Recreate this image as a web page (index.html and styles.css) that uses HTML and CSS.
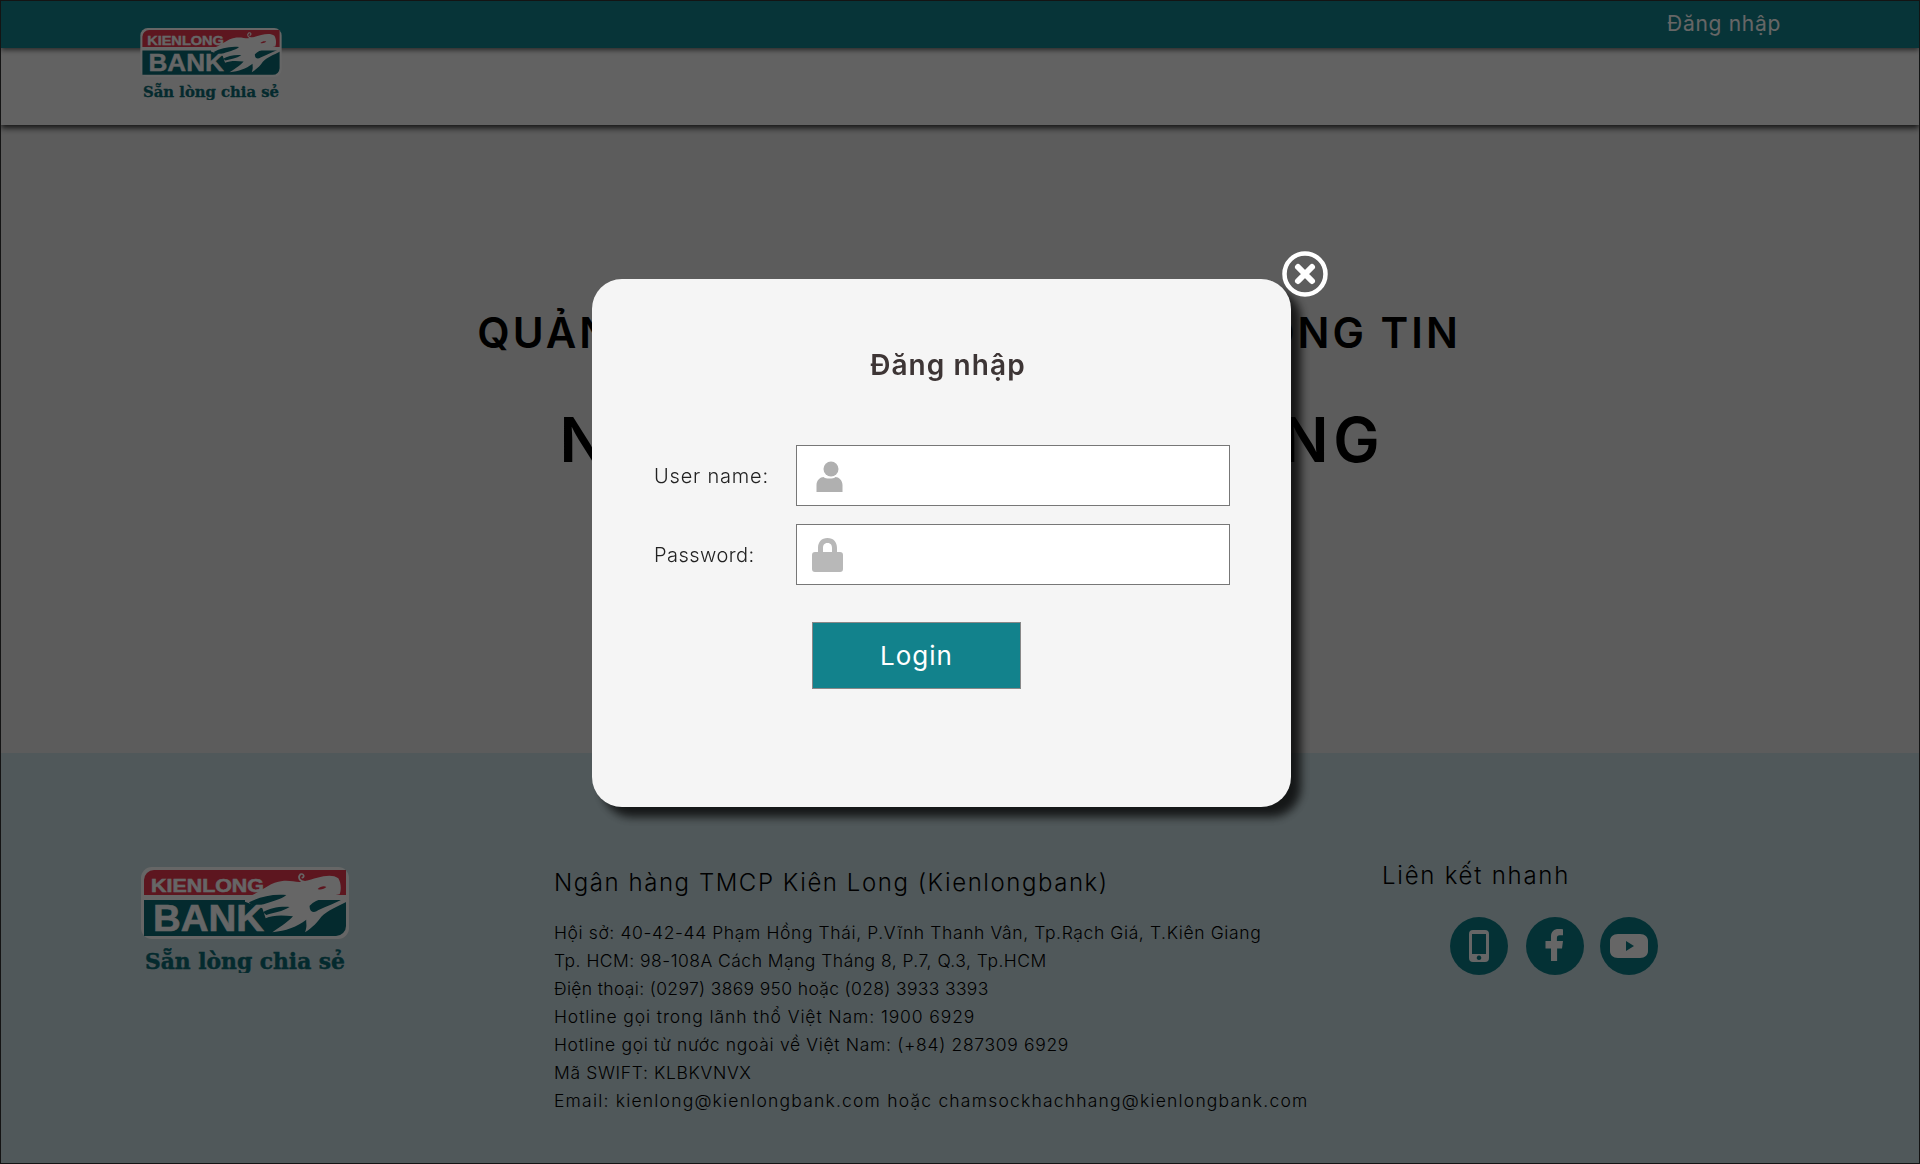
FILE: index.html
```html
<!DOCTYPE html>
<html lang="vi">
<head>
<meta charset="utf-8">
<title>Kienlongbank</title>
<link rel="stylesheet" href="styles.css">
</head>
<body>
<svg class="defs" width="0" height="0">
  <symbol id="kl-logo" viewBox="0 0 208 106">
    <rect x="0" y="0" width="208" height="72" rx="11" fill="#fff"/>
    <path d="M3 28V13a10 10 0 0 1 10-10H205V28Z" fill="#e8384e"/>
    <path d="M3 33H205V59a10 10 0 0 1-10 10H3Z" fill="#0a6a73"/>
    <g transform="translate(108 -2) scale(.3333)">
      <path fill="#fff" d="M-12 98C30 88 58 52 100 48C130 45 145 56 170 48C200 40 245 22 268 40C277 55 277 75 272 88C240 95 205 100 182 122C180 140 195 146 207 136C232 124 265 112 293 96V110C265 125 235 136 217 155C205 172 192 186 168 202C176 182 170 172 172 164C140 188 112 196 70 202C100 182 120 168 132 154C100 150 70 150 50 160L40 130L-12 110Z"/>
      <path fill="#0a6a73" d="M0 112C30 96 70 86 112 90C96 104 60 112 30 122C18 126 8 122 0 112Z"/>
      <path fill="#0a6a73" d="M42 142C60 130 90 124 122 126C100 140 76 142 52 150Z"/>
      <path fill="none" stroke="#fff" stroke-width="5" stroke-linecap="round" d="M172 50C150 52 146 36 154 28C164 24 168 36 160 38"/>
      <path fill="#e8384e" d="M206 72C214 64 226 62 232 66C226 72 214 76 206 72Z"/>
    </g>
    <text x="10" y="24.5" class="lg-top" textLength="113" lengthAdjust="spacingAndGlyphs">KIENLONG</text>
    <text x="12" y="64" class="lg-bank" textLength="111" lengthAdjust="spacingAndGlyphs">BANK</text>
    <text x="4" y="102" class="lg-tag" textLength="200" lengthAdjust="spacingAndGlyphs">Sẵn lòng chia sẻ</text>
  </symbol>
</svg>
<div class="page">
  <header class="site-header">
    <div class="topbar"><a class="top-login">Đăng nhập</a></div>
    <nav class="navbar"></nav>
    <svg class="header-logo"><use href="#kl-logo"/></svg>
  </header>
  <main class="hero">
    <h2 class="hero-sub">QUẢN LÝ VÀ TRA CỨU DỮ LIỆU THÔNG TIN</h2>
    <h1 class="hero-title">NGÂN HÀNG KIÊN LONG</h1>
  </main>
  <footer class="site-footer">
    <div class="foot-brand"><svg class="footer-logo"><use href="#kl-logo"/></svg></div>
    <div class="foot-info">
      <h3 class="foot-name">Ngân hàng TMCP Kiên Long (Kienlongbank)</h3>
      <ul class="foot-lines">
        <li class="line-address">Hội sở: 40-42-44 Phạm Hồng Thái, P.Vĩnh Thanh Vân, Tp.Rạch Giá, T.Kiên Giang</li>
        <li class="line-branch">Tp. HCM: 98-108A Cách Mạng Tháng 8, P.7, Q.3, Tp.HCM</li>
        <li class="line-phone">Điện thoại: (0297) 3869 950 hoặc (028) 3933 3393</li>
        <li class="line-hotline">Hotline gọi trong lãnh thổ Việt Nam: 1900 6929</li>
        <li class="line-intl">Hotline gọi từ nước ngoài về Việt Nam: (+84) 287309 6929</li>
        <li class="line-swift">Mã SWIFT: KLBKVNVX</li>
        <li class="line-email">Email: kienlong@kienlongbank.com hoặc chamsockhachhang@kienlongbank.com</li>
      </ul>
    </div>
    <div class="foot-links">
      <h3 class="foot-links-title">Liên kết nhanh</h3>
      <div class="social">
        <a class="social-btn"><svg viewBox="0 0 58 58" width="58" height="58"><path fill="#fff" fill-rule="evenodd" d="M23 13h12a4 4 0 0 1 4 4v24a4 4 0 0 1-4 4H23a4 4 0 0 1-4-4V17a4 4 0 0 1 4-4ZM22 17v20h14V17ZM29 38.500a2.300 2.300 0 1 0 .01 0Z"/></svg></a>
        <a class="social-btn social-mid"><svg viewBox="0 0 58 58" width="58" height="58"><path fill="#fff" d="M25 44V31.500h-5.500V24H25v-4.500C25 14.500 28 12 32.500 12c2 0 3.800.2 4.500.3v6h-3.200c-2.400 0-2.900 1.200-2.900 2.900V24H37l-1 7.500h-4.900V44Z"/></svg></a>
        <a class="social-btn"><svg viewBox="0 0 58 58" width="58" height="58"><path fill="#fff" fill-rule="evenodd" d="M18 17h22c5 0 8 3 8 7v10c0 4-3 7-8 7H18c-5 0-8-3-8-7V24c0-4 3-7 8-7ZM26 24v10l8-5Z"/></svg></a>
      </div>
    </div>
  </footer>
</div>
<div class="overlay">
  <section class="modal">
    <h2 class="modal-title">Đăng nhập</h2>
    <form class="login-form">
      <label class="form-label">User name:</label>
      <div class="field">
        <svg class="field-icon" viewBox="0 0 31 34" width="31" height="34"><circle cx="19" cy="10" r="7.500" fill="#b0b0b0"/><path fill="#b0b0b0" d="M6 33V26c0-5 4-8 7-8 2 2 10 2 12 0 3 0 7 3 7 8v7Z" transform="translate(-1.500 0)"/></svg>
        <input class="field-input" type="text" aria-label="User name">
      </div>
      <label class="form-label form-label-pass">Password:</label>
      <div class="field">
        <svg class="field-icon" viewBox="0 0 31 34" width="31" height="34"><path fill="#b8b8b8" fill-rule="evenodd" d="M15.500 0C21.500 0 25 4 25 10v4h3c2 0 3 1 3 3v14c0 2-1 3-3 3H3c-2 0-3-1-3-3V17c0-2 1-3 3-3h3v-4C6 4 9.500 0 15.500 0ZM15.500 5C12 5 11 7.500 11 10v4h9v-4c0-2.500-1-5-4.500-5Z"/></svg>
        <input class="field-input" type="password" aria-label="Password">
      </div>
      <button class="login-btn" type="button">Login</button>
    </form>
    <button class="modal-close" type="button" aria-label="Close"><svg viewBox="0 0 46 46" width="46" height="46"><circle cx="23" cy="23" r="20.500" fill="none" stroke="#fff" stroke-width="4.500"/><path d="M16 16L30 30M30 16L16 30" stroke="#fff" stroke-width="6" stroke-linecap="round"/></svg></button>
  </section>
</div>
</body>
</html>
```

FILE: styles.css
```css
* { box-sizing: border-box; }
html, body { margin: 0; padding: 0; }
body { font-family: "Inter", "Noto Sans", sans-serif; background: #fff; }
h1, h2, h3, ul { margin: 0; padding: 0; font-weight: normal; }
ul { list-style: none; }
.defs { position: absolute; }
.lg-top { font: 700 17.500px "Liberation Sans", sans-serif; fill: #fff; stroke: #fff; stroke-width: .5px; }
.lg-bank { font: 700 36px "Liberation Sans", sans-serif; fill: #fff; stroke: #fff; stroke-width: .6px; }
.lg-tag { font: 700 22px "DejaVu Serif", serif; fill: #0a6a73; stroke: #0a6a73; stroke-width: .5px; }

.page { width: 1920px; height: 1164px; border: 1px solid #333; display: flex; flex-direction: column; overflow: hidden; }

.site-header { position: relative; z-index: 2; }
.topbar { height: 47px; background: #12828c; display: flex; justify-content: flex-end; align-items: center; padding: 0 138px 2px 0; box-shadow: 0 2px 5px rgba(0,0,0,.6); position: relative; z-index: 1; }
.top-login { color: #fff; font-size: 21px; letter-spacing: .7px; }
.navbar { height: 77px; background: #f5f5f5; box-shadow: 0 3px 6px rgba(0,0,0,.8); }
.header-logo { position: absolute; left: 139px; top: 27px; width: 142px; height: 72px; z-index: 2; }

.hero { flex: 1; background: #e6e6e6; display: flex; flex-direction: column; align-items: center; padding: 183px 0 0 20px; color: #000; }
.hero-sub { font-size: 42px; line-height: 50px; font-weight: 600; letter-spacing: 3px; white-space: nowrap; margin-right: 2px; }
.hero-title { font-size: 62px; line-height: 80px; font-weight: 600; letter-spacing: 4.7px; margin: 42px 0 0 4px; white-space: nowrap; }

.site-footer { height: 410px; background: #c8dce1; padding: 106px 0 0 140px; display: grid; grid-template-columns: 413px 828px auto; color: #000; }
.foot-brand { padding-top: 8px; }
.footer-logo { width: 208px; height: 106px; display: block; }
.foot-info { padding-top: 9px; }
.foot-name { font-size: 24px; line-height: 30px; font-weight: 300; letter-spacing: 1.55px; white-space: nowrap; }
.foot-lines { margin-top: 21px; font-size: 17.500px; line-height: 28px; font-weight: 300; white-space: nowrap; }
.line-address { letter-spacing: .61px; }
.line-branch { letter-spacing: .47px; }
.line-phone { letter-spacing: .34px; }
.line-hotline { letter-spacing: .9px; }
.line-intl { letter-spacing: .67px; }
.line-swift { letter-spacing: .65px; }
.line-email { letter-spacing: 1.2px; }
.foot-links { padding-top: 2px; }
.foot-links-title { font-size: 24px; line-height: 30px; font-weight: 300; letter-spacing: 1.75px; white-space: nowrap; }
.social { display: flex; gap: 17px; margin: 26px 0 0 68px; }
.social-btn { width: 58px; height: 58px; border-radius: 50%; background: #0c7b85; display: block; }
.social-mid { margin: 0 -1px 0 1px; }
.social-btn svg { display: block; }

.overlay { position: fixed; inset: 0; background: rgba(0,0,0,.6); z-index: 10; }
.modal { position: absolute; left: 592px; top: 279px; width: 699px; height: 528px; background: #f5f5f5; border-radius: 30px; box-shadow: 10px 10px 10px rgba(0,0,0,.75); padding: 66px 0 0 62px; }
.modal-title { width: 588px; text-align: center; font-size: 28px; line-height: 40px; font-weight: 600; color: #3d3535; letter-spacing: 1.1px; }
.login-form { margin-top: 60px; display: grid; grid-template-columns: 142px 434px; row-gap: 18px; align-items: center; }
.form-label { font-size: 20px; font-weight: 300; color: #222; letter-spacing: .8px; }
.form-label-pass { letter-spacing: .45px; }
.field { height: 61px; background: #fff; border: 1px solid #777; display: flex; align-items: center; padding-left: 15px; }
.field-icon { flex: none; }
.field-input { flex: 1; min-width: 0; height: 100%; border: 0; background: transparent; outline: 0; }
.login-btn { grid-column: 1 / 3; justify-self: start; margin: 19px 0 0 158px; width: 209px; height: 67px; background: #12828c; border: 1px solid #888; color: #fff; font: 400 26px "Inter", sans-serif; letter-spacing: 1px; }
.modal-close { position: absolute; right: -37px; top: -28px; width: 46px; height: 46px; padding: 0; border: 0; background: none; }
.modal-close svg { display: block; }
```
